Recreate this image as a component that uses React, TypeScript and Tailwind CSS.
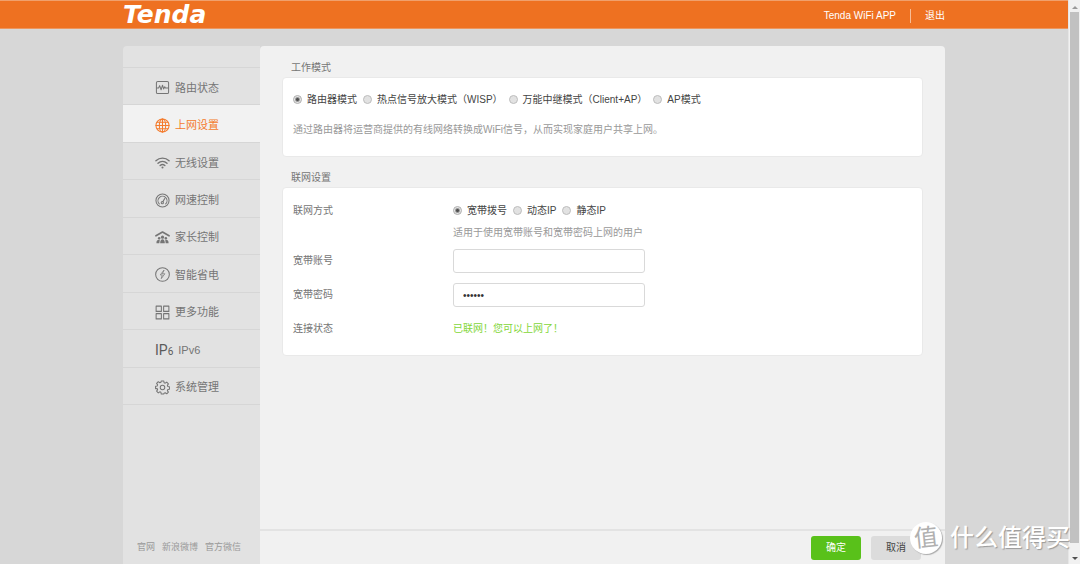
import React, { useState } from 'react';
import clsx from 'clsx';

interface IconProps {
  children: React.ReactNode;
}

const Icon: React.FC<IconProps> = ({ children }) => (
  <svg
    viewBox="0 0 16 16"
    className="w-[15px] h-[15px] shrink-0"
    fill="none"
    stroke="currentColor"
    strokeWidth="1.1"
    strokeLinecap="round"
    strokeLinejoin="round"
    aria-hidden="true"
  >
    {children}
  </svg>
);

const StatusIcon = () => (
  <Icon>
    <rect x="1.5" y="1.5" width="13" height="13" rx="1.5" />
    <path d="M1.8 8.5h2l1.2-2.5 1.5 4.5L8 5.5l1.2 4 1.2-2.3.8 1.3h3" />
  </Icon>
);

const GlobeIcon = () => (
  <Icon>
    <circle cx="8" cy="8" r="7" />
    <ellipse cx="8" cy="8" rx="3.4" ry="7" />
    <path d="M8 1v14M1 8h14M2 4.5h12M2 11.5h12" />
  </Icon>
);

const WifiIcon = () => (
  <Icon>
    <path d="M1 6.2c4-3.8 10-3.8 14 0M3.2 8.8c2.8-2.6 6.8-2.6 9.6 0M5.5 11.2c1.5-1.3 3.5-1.3 5 0" strokeWidth="1.5" />
    <circle cx="8" cy="13.3" r="1.1" fill="currentColor" stroke="none" />
  </Icon>
);

const GaugeIcon = () => (
  <Icon>
    <circle cx="8" cy="8" r="7" />
    <path d="M4.6 11.6A4.8 4.8 0 1 1 11.4 11.6M8.4 9.4l1.9-3.4" />
    <circle cx="7.8" cy="10.3" r="1.2" />
  </Icon>
);

const FamilyIcon = () => (
  <Icon>
    <path d="M1 6.2L8 2.2l7 4" strokeWidth="1.7" />
    <g fill="currentColor" stroke="none">
      <circle cx="8" cy="7.6" r="1.7" />
      <circle cx="4.4" cy="8.7" r="1.3" />
      <circle cx="11.6" cy="8.7" r="1.3" />
      <path d="M5.5 14c0-5.6 5-5.6 5 0zM1.5 14c0-3 1.2-3.8 3.6-3.6L4.6 14zM14.5 14c0-3-1.2-3.8-3.6-3.6l.5 3.6z" />
    </g>
  </Icon>
);

const PowerIcon = () => (
  <Icon>
    <circle cx="8" cy="8" r="7.3" />
    <path d="M9.4 3.6L5.6 8.4h2.1l-1 4 3.8-5.2H8.3z" strokeWidth="0.8" />
  </Icon>
);

const GridIcon = () => (
  <Icon>
    <path d="M1.2 1.2h5.6v5.6H1.200zM9.2 1.2h5.600v5.600H9.200zM1.200 9.200h5.600v5.600H1.200zM9.200 9.200h5.600v5.600H9.200z" />
  </Icon>
);

const GearIcon = () => (
  <Icon>
    <path d="M6.7 1h2.6l.4 1.9 1.2.5 1.6-1.1 1.8 1.8-1.1 1.6.5 1.2 1.7.3v2.6l-1.7.3-.5 1.2 1.1 1.6-1.8 1.8-1.6-1.1-1.2.5L9.3 15H6.7l-.4-1.9-1.2-.5-1.6 1.1-1.8-1.8 1.1-1.6-.5-1.2L.6 9.3V6.7l1.7-.3.5-1.2-1.1-1.6 1.8-1.8 1.6 1.1 1.2-.5z" />
    <circle cx="8" cy="8" r="2.4" />
  </Icon>
);

const Ipv6Icon = () => (
  <span
    className="flex items-baseline text-[14px] leading-none text-[#5a5a5a] font-['Roboto']"
    aria-hidden="true"
  >
    IP<span className="text-[10px]">6</span>
  </span>
);

const NAV_ITEMS = [
  { label: '路由状态', icon: StatusIcon },
  { label: '上网设置', icon: GlobeIcon },
  { label: '无线设置', icon: WifiIcon },
  { label: '网速控制', icon: GaugeIcon },
  { label: '家长控制', icon: FamilyIcon },
  { label: '智能省电', icon: PowerIcon },
  { label: '更多功能', icon: GridIcon },
  { label: 'IPv6', icon: Ipv6Icon },
  { label: '系统管理', icon: GearIcon },
];

const WORK_MODES = ['路由器模式', '热点信号放大模式（WISP）', '万能中继模式（Client+AP）', 'AP模式'];
const WAN_TYPES = ['宽带拨号', '动态IP', '静态IP'];

interface RadioGroupProps {
  name: string;
  label: string;
  options: string[];
}

const RadioGroup: React.FC<RadioGroupProps> = ({ name, label, options }) => {
  const [value, setValue] = useState(options[0]);

  return (
    <div role="radiogroup" aria-label={label} className="flex flex-wrap gap-x-[6px] text-[#444]">
      {options.map((option) => (
        <label key={option} className="flex items-center gap-[5px]">
          <input
            type="radio"
            name={name}
            checked={value === option}
            onChange={() => setValue(option)}
            className="appearance-none w-[9px] h-[9px] mb-[2px] shrink-0 rounded-full border border-[#bdbdbd] bg-[#e2e2e2] checked:border-[#b0b0b0] checked:bg-[radial-gradient(circle,#505050_0_1px,#e6e6e6_3px)]"
          />
          {option}
        </label>
      ))}
    </div>
  );
};

const Section: React.FC<{ title: string; children: React.ReactNode }> = ({ title, children }) => (
  <section>
    <h2 className="pl-[9px] pb-px leading-4">{title}</h2>
    <div className="rounded border border-[#e9e9e9] bg-white px-[10px]">{children}</div>
  </section>
);

const INPUT_CLASS =
  'w-48 h-6 rounded-[3px] border border-[#d9d9d9] bg-white px-[9px] text-[10px] text-[#333] focus:outline-none focus:border-[#ee7121]';

export default function App() {
  const [active, setActive] = useState('上网设置');

  return (
    <div className="relative flex h-screen overflow-hidden bg-[#d7d7d7] text-[10px] leading-4 text-[#757575] font-['Liberation_Sans','Noto_Sans_CJK_SC',sans-serif]">
      <div className="flex flex-1 min-w-0 flex-col">
        <header className="h-[29px] shrink-0 border-y border-t-[#f0a06c] border-b-[#eb965f] bg-[#ee7121] text-white">
          <div className="mx-auto flex h-full max-w-[822px] items-center justify-between">
            <a href="#" className="font-['DejaVu_Sans'] text-[25px] leading-none font-bold italic">
              Tenda
            </a>
            <div className="flex items-center pt-[2px]">
              <a href="#">Tenda WiFi APP</a>
              <span className="mx-[14px] h-[14px] w-px bg-[#f7bd96]" />
              <a href="#">退出</a>
            </div>
          </div>
        </header>

        <div className="mx-auto mt-[17px] flex w-full max-w-[822px] flex-1 min-h-0">
          <aside className="flex w-[137px] shrink-0 flex-col rounded-tl bg-[#e2e2e2] pt-[21px]">
            <nav className="flex h-[338px] flex-col border-b border-[#d6d6d6] text-[11px]">
              {NAV_ITEMS.map(({ label, icon: ItemIcon }) => (
                <a
                  key={label}
                  href="#"
                  onClick={() => setActive(label)}
                  className={clsx(
                    'flex flex-1 items-center gap-[5px] border-t border-[#d6d6d6] pl-8 pt-[3px]',
                    active === label && 'bg-[#f2f2f2] text-[#f47b2c]'
                  )}
                >
                  <ItemIcon />
                  {label}
                </a>
              ))}
            </nav>
            <div className="mt-auto flex gap-[7px] pl-[14px] pb-[9px] text-[9px] text-[#999]">
              <a href="#">官网</a>
              <a href="#">新浪微博</a>
              <a href="#">官方微信</a>
            </div>
          </aside>

          <main className="flex flex-1 min-w-0 flex-col rounded-t bg-[#f1f1f1]">
            <div className="flex flex-1 min-h-0 flex-col gap-[13px] overflow-hidden px-[22px] pt-[14px]">
              <Section title="工作模式">
                <div className="pt-[14px] pb-[18px]">
                  <RadioGroup name="mode" label="工作模式" options={WORK_MODES} />
                  <p className="mt-[14px] text-[#999]">
                    通过路由器将运营商提供的有线网络转换成WiFi信号，从而实现家庭用户共享上网。
                  </p>
                </div>
              </Section>

              <Section title="联网设置">
                <div className="grid grid-cols-[160px_1fr] items-center pt-[15px] pb-[18px]">
                  <span>联网方式</span>
                  <RadioGroup name="wan" label="联网方式" options={WAN_TYPES} />
                  <p className="col-start-2 mt-[6px] text-[#999]">适用于使用宽带账号和宽带密码上网的用户</p>
                  <label htmlFor="account" className="mt-2">宽带账号</label>
                  <input id="account" type="text" className={clsx(INPUT_CLASS, 'mt-2')} />
                  <label htmlFor="password" className="mt-[10px]">宽带密码</label>
                  <input id="password" type="password" defaultValue="123456" className={clsx(INPUT_CLASS, 'mt-[10px]')} />
                  <span className="mt-[14px]">连接状态</span>
                  <span className="mt-[14px] text-[#84d63a]">已联网！您可以上网了！</span>
                </div>
              </Section>
            </div>

            <div className="flex h-[35px] shrink-0 justify-end gap-[10px] border-t-2 border-[#e3e3e3] pt-[5px] pr-6">
              <button className="h-6 w-[50px] rounded-[3px] bg-[#59c11a] text-white">确定</button>
              <button className="h-6 w-[50px] rounded-[3px] bg-[#dcdcdc] text-[#444]">取消</button>
            </div>
          </main>
        </div>
      </div>

      {/* Scrollbar track */}
      <div className="flex w-3 shrink-0 flex-col items-center justify-between border-l border-[#e6e6e6] bg-[#f1f1f1] px-px" aria-hidden="true">
        <svg viewBox="0 0 12 12" className="h-3 w-3 shrink-0">
          <path d="M3 9L6 6l3 3z" fill="#999" />
        </svg>
        <div className="w-full flex-1 bg-[#c1c1c1]" />
        <svg viewBox="0 0 12 21" className="h-[21px] w-3 shrink-0">
          <path d="M3 14l3 3 3-3z" fill="#505050" />
        </svg>
      </div>

      {/* Floating brand mark */}
      <div className="pointer-events-none absolute right-[10px] bottom-[10px] flex items-center gap-2 text-white">
        <span className="flex h-8 w-8 items-center justify-center rounded-full bg-white text-[24px] leading-none text-[#b0b0b0] shadow-[1px_1px_1px_#aaa]">
          <span className="-rotate-6">值</span>
        </span>
        <span className="text-[24px] leading-8 font-medium [text-shadow:1px_1px_1px_#999]">什么值得买</span>
      </div>
    </div>
  );
}
